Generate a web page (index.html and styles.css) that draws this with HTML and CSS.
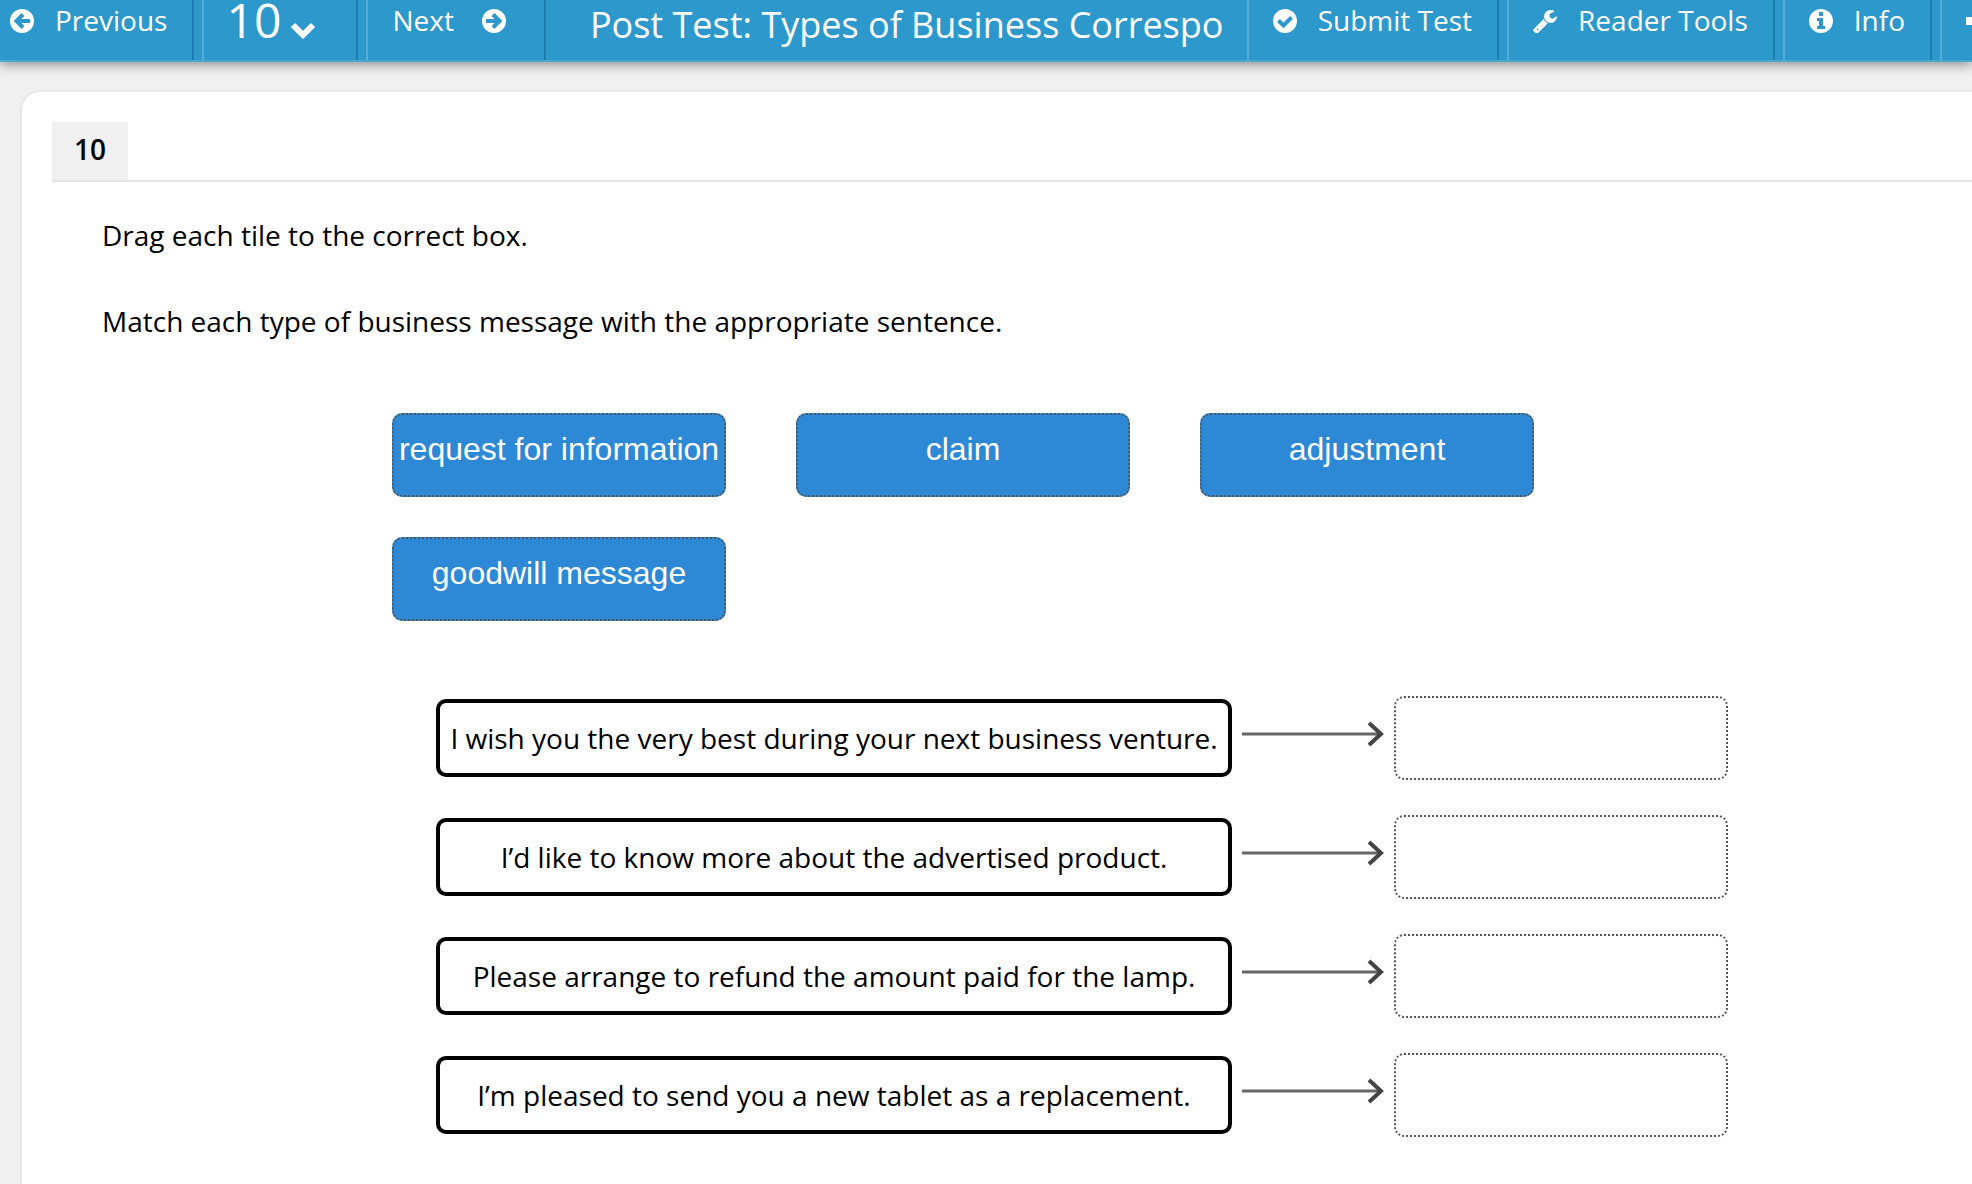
FILE: index.html
```html
<!DOCTYPE html>
<html lang="en">
<head>
    <meta charset="UTF-8">
    <meta name="viewport" content="width=device-width, initial-scale=1.0">
    <title>Post Test</title>
    <link rel="stylesheet" href="styles.css">
</head>
<body>

    <!-- Toolbar -->
    <header class="toolbar">
        <button class="tool tool-prev">
            <svg class="icon" viewBox="0 0 24 24"><circle cx="12" cy="12" r="12"/><path class="cut" d="M20 12H7M13 5.500L6.500 12l6.500 6.500"/></svg>
            Previous
        </button>
        <label class="tool tool-page">
            <select class="page-select" aria-label="Question">
                <option>1</option>
                <option>2</option>
                <option>3</option>
                <option>4</option>
                <option>5</option>
                <option>6</option>
                <option>7</option>
                <option>8</option>
                <option>9</option>
                <option selected>10</option>
            </select>
            <svg class="chevron" viewBox="0 0 26 18"><path d="M3 4l10 10L23 4"/></svg>
        </label>
        <button class="tool tool-next">
            Next
            <svg class="icon" viewBox="0 0 24 24"><circle cx="12" cy="12" r="12"/><path class="cut" d="M4 12h13M11 5.500l6.500 6.500-6.500 6.500"/></svg>
        </button>
        <h1 class="title">Post Test: Types of Business Correspo</h1>
        <button class="tool">
            <svg class="icon" viewBox="0 0 24 24"><circle cx="12" cy="12" r="12"/><path class="cut" d="M5.500 11.500l5 5 8-8"/></svg>
            Submit Test
        </button>
        <button class="tool">
            <svg class="icon" viewBox="64 64 1664 1664"><path d="M448 1472q0-26-19-45t-45-19-45 19-19 45 19 45 45 19 45-19 19-45zm644-420l-682 682q-37 37-90 37-52 0-91-37l-106-108q-38-36-38-90 0-53 38-91l681-681q39 98 114.500 173.500t173.500 114.500zm634-435q0 39-23 106-47 134-164.500 217.500t-258.500 83.500q-185 0-316.500-131.500t-131.500-316.500 131.500-316.500 316.500-131.500q58 0 121.500 16.500t107.500 46.500q16 11 16 28t-16 28l-293 169v224l193 107q5-3 79-48.500t135.500-81 70.500-35.500q15 0 23.500 10t8.500 25z"/></svg>
            Reader Tools
        </button>
        <button class="tool">
            <svg class="icon" viewBox="0 0 24 24"><circle cx="12" cy="12" r="12"/><path class="hole" d="M10 3h4v4h-4zM8 9h6v8h2v3H8v-3h2v-5H8z"/></svg>
            Info
        </button>
        <button class="tool tool-more" aria-label="More">
            <svg class="icon" viewBox="0 0 24 24"><path d="M0 8h24v8H0z"/></svg>
        </button>
    </header>

    <!-- Question -->
    <main class="card">
        <div class="question-head">
            <span class="question-number">10</span>
        </div>

        <div class="question-text">
            <p>Drag each tile to the correct box.</p>
            <p>Match each type of business message with the appropriate sentence.</p>
        </div>

        <div class="tiles">
            <button class="tile" draggable="true">request for information</button>
            <button class="tile" draggable="true">claim</button>
            <button class="tile" draggable="true">adjustment</button>
            <button class="tile" draggable="true">goodwill message</button>
        </div>

        <div class="pairs">
            <div class="pair">
                <p class="sentence">I wish you the very best during your next business venture.</p>
                <svg class="arrow" viewBox="0 0 142 26"><path class="shaft" d="M0 13h138"/><path class="head" d="M127 2l12 11-12 11"/></svg>
                <div class="drop"></div>
            </div>
            <div class="pair">
                <p class="sentence">I’d like to know more about the advertised product.</p>
                <svg class="arrow" viewBox="0 0 142 26"><path class="shaft" d="M0 13h138"/><path class="head" d="M127 2l12 11-12 11"/></svg>
                <div class="drop"></div>
            </div>
            <div class="pair">
                <p class="sentence">Please arrange to refund the amount paid for the lamp.</p>
                <svg class="arrow" viewBox="0 0 142 26"><path class="shaft" d="M0 13h138"/><path class="head" d="M127 2l12 11-12 11"/></svg>
                <div class="drop"></div>
            </div>
            <div class="pair">
                <p class="sentence">I’m pleased to send you a new tablet as a replacement.</p>
                <svg class="arrow" viewBox="0 0 142 26"><path class="shaft" d="M0 13h138"/><path class="head" d="M127 2l12 11-12 11"/></svg>
                <div class="drop"></div>
            </div>
        </div>
    </main>

</body>
</html>
```
FILE: styles.css
```css
* {
    box-sizing: border-box;
}
body {
    margin: 0;
    min-height: 100vh;
    display: flex;
    flex-direction: column;
    background-color: #f0f0f0;
    font-family: "Open Sans", sans-serif;
    font-size: 28px;
    line-height: 38px;
    color: #000;
    overflow-x: hidden;
}
p {
    margin: 0;
}

/* Toolbar */
.toolbar {
    display: flex;
    height: 62px;
    background-color: #2c98cb;
    border-bottom: 2px solid #4ba8d3;
    box-shadow: 0 2px 12px rgba(0, 0, 0, 0.45);
    color: #fff;
}
.tool {
    display: flex;
    flex: none;
    align-items: flex-start;
    gap: 21px;
    margin: 0 8px 0 0;
    padding: 1px 25px 0 24px;
    border: 0;
    border-left: 2px solid #56aed8;
    border-right: 2px solid #1c7cab;
    background: none;
    color: inherit;
    font: inherit;
    cursor: pointer;
}
.tool-prev {
    border-left: 0;
    padding-left: 10px;
}
.tool-page {
    gap: 8px;
    padding-left: 22px;
    padding-right: 40px;
}
.tool-next {
    gap: 28px;
    padding-right: 38px;
    margin-right: 0;
}
.tool-more {
    width: 32px;
    margin: 0;
    padding-right: 0;
    border-right: 0;
    overflow: hidden;
}
.icon {
    flex: none;
    width: 24px;
    height: 24px;
    margin-top: 8px;
    fill: #fff;
}
.icon .cut {
    fill: none;
    stroke: #2c98cb;
    stroke-width: 4;
}
.icon .hole {
    fill: #2c98cb;
}
.page-select {
    width: 56px;
    height: 58px;
    margin-top: -10px;
    padding: 0;
    border: 0;
    background: none;
    appearance: none;
    color: #fff;
    font-family: inherit;
    font-size: 48px;
    line-height: 58px;
}
.page-select option {
    color: #000;
    font-size: 28px;
}
.chevron {
    width: 26px;
    height: 18px;
    margin-top: 20px;
    fill: none;
    stroke: #fff;
    stroke-width: 6;
}
.title {
    flex: 1 1 0;
    min-width: 0;
    margin: 0 24px 0 44px;
    font-size: 36px;
    line-height: 50px;
    font-weight: 400;
    white-space: nowrap;
    overflow: hidden;
}

/* Question card */
.card {
    flex: 1;
    margin: 28px -24px 0 20px;
    padding: 30px 0 40px 30px;
    background-color: #fff;
    border: 2px solid #e8e8e8;
    border-bottom: 0;
    border-radius: 20px 20px 0 0;
}
.question-head {
    display: flex;
    border-bottom: 2px solid #e4e4e4;
}
.question-number {
    min-width: 76px;
    padding: 8px 20px 12px;
    background-color: #f0f0f0;
    font-weight: 600;
    text-align: center;
}
.question-text {
    display: flex;
    flex-direction: column;
    gap: 48px;
    padding: 34px 50px 0;
}

/* Draggable tiles */
.tiles {
    display: flex;
    flex-wrap: wrap;
    gap: 40px 70px;
    max-width: 1142px;
    margin: 73px 0 0 340px;
}
.tile {
    display: flex;
    justify-content: center;
    align-items: flex-start;
    width: 334px;
    height: 84px;
    padding: 16px 0 0;
    border: 2px dotted #555;
    border-radius: 10px;
    background-color: #2d88d6;
    color: #fff;
    font-family: "Liberation Sans", Arial, sans-serif;
    font-size: 32px;
    line-height: 36px;
    white-space: nowrap;
    cursor: pointer;
}

/* Sentences with drop boxes */
.pairs {
    display: flex;
    flex-direction: column;
    gap: 35px;
    margin: 75px 0 0 384px;
}
.pair {
    display: flex;
    align-items: center;
}
.sentence {
    width: 796px;
    padding: 16px 8px;
    border: 4px solid #000;
    border-radius: 10px;
    text-align: center;
    white-space: nowrap;
}
.arrow {
    width: 142px;
    height: 26px;
    margin: 0 10px 8px;
    fill: none;
}
.arrow .shaft {
    stroke: #666;
    stroke-width: 3;
}
.arrow .head {
    stroke: #444;
    stroke-width: 4;
}
.drop {
    width: 334px;
    height: 84px;
    border: 2px dotted #555;
    border-radius: 10px;
}
```
